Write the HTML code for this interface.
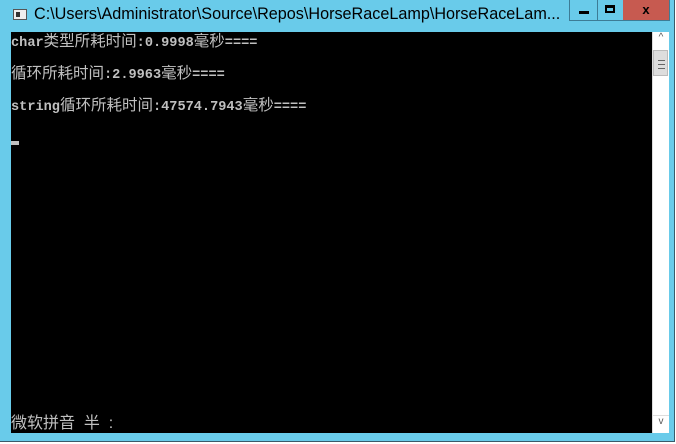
<!DOCTYPE html>
<html><head><meta charset="utf-8"><style>
body{margin:0;width:676px;height:444px;background:#fff;overflow:hidden;position:relative;font-family:"Liberation Sans","Noto Sans CJK SC",sans-serif}
#win{position:absolute;left:0;top:0;width:675px;height:442px;background:#69cbea;border-right:1px solid #3a5a6a;border-bottom:1px solid #3a5a6a;box-sizing:border-box}
#title{position:absolute;left:34px;top:5px;font-size:16.2px;color:#000;white-space:nowrap}
#icon{position:absolute;left:13px;top:9px;width:14px;height:11px;background:#eee;border:1px solid #555;box-sizing:border-box}
#icon:after{content:"";position:absolute;left:2px;top:2px;width:4px;height:5px;background:#333}
.btn{position:absolute;top:0;height:21px;border:1px solid #3d7c96;border-top:none;box-sizing:border-box}
#con{position:absolute;left:11px;top:32px;width:641px;height:401px;background:#000;color:#c0c0c0;font-size:15.5px;line-height:16px}
.l{position:absolute;left:0;white-space:nowrap}
.m{font-family:"Liberation Mono",monospace;font-weight:bold;font-size:13.6px}
#sb{position:absolute;left:652px;top:32px;width:17px;height:401px;background:#fff;border-left:1px solid #ddd;box-sizing:border-box}
</style></head><body>
<div id="win">
<div id="icon"></div>
<div id="title">C:\Users\Administrator\Source\Repos\HorseRaceLamp\HorseRaceLam...</div>
<div class="btn" style="left:569px;width:29px"><div style="position:absolute;left:9px;top:11px;width:10px;height:3px;background:#000"></div></div>
<div class="btn" style="left:597px;width:27px;border-left:none"><div style="position:absolute;left:8px;top:5px;width:10px;height:8px;border:2px solid #000;border-top-width:3px;box-sizing:border-box"></div></div>
<div class="btn" style="left:623px;width:47px;background:#c75a50;border-left:none;text-align:center;font:bold 13px 'Liberation Sans';line-height:20px">x</div>
<div id="con">
<div class="l" style="top:2px"><span class="m">char</span>类型所耗时间<span class="m">:0.9998</span>毫秒<span class="m">====</span></div>
<div class="l" style="top:34px">循环所耗时间<span class="m">:2.9963</span>毫秒<span class="m">====</span></div>
<div class="l" style="top:66px"><span class="m">string</span>循环所耗时间<span class="m">:47574.7943</span>毫秒<span class="m">====</span></div>
<div style="position:absolute;left:0;top:109px;width:8px;height:4px;background:#c0c0c0"></div>
<div class="l" style="top:384px;font-size:16px">微软拼音&nbsp;&nbsp;半&nbsp;&nbsp;:</div>
</div>
<div id="sb">
<div style="position:absolute;left:0;top:0;width:16px;height:17px;text-align:center;font-size:10px;color:#555">^</div>
<div style="position:absolute;left:0;top:18px;width:15px;height:26px;background:#ddd;border:1px solid #bbb;box-sizing:border-box"><div style="position:absolute;left:4px;top:9px;width:7px;height:7px;border-top:1px solid #666;border-bottom:1px solid #666"><div style="margin-top:3px;height:1px;background:#666"></div></div></div>
<div style="position:absolute;left:0;bottom:0;width:16px;height:17px;text-align:center;font-size:10px;color:#555;border-top:1px solid #ddd">v</div>
</div>
</div>
</body></html>
